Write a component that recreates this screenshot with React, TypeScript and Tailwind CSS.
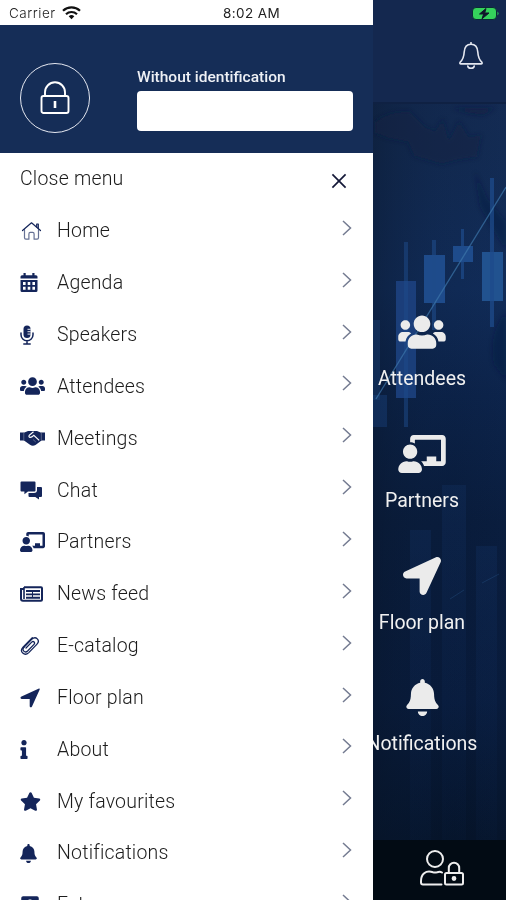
import type { ReactNode } from 'react'
import {
  FaBell,
  FaChalkboardTeacher,
  FaInfo,
  FaLocationArrow,
  FaPlusSquare,
  FaStar,
  FaUsers,
} from 'react-icons/fa'

function HomeIcon() {
  return (
    <svg width="22" height="20" viewBox="-1 0 21 20" fill="none" stroke="currentColor" strokeWidth="1.2" strokeLinejoin="round" strokeLinecap="round">
      <path d="M1 9.5 10 1.8l9 7.7" />
      <path d="M15.2 6V3h1.6v4.5" />
      <path d="M3 8.6v8.2q0 1.4 1.4 1.4h3V13q0-1.6 1.4-1.6h2.4q1.4 0 1.4 1.6v5.200h3q1.400 0 1.400-1.400V8.600" opacity=".65" />
    </svg>
  )
}

function CalendarIcon() {
  return (
    <svg width="18" height="20" viewBox="0 0 18 20" fill="currentColor">
      <path d="M3.500 0h2.200v2.200h6.600V0h2.200v2.200H16A1.500 1.500 0 0 1 17.500 3.700V5.500H.500V3.700A1.500 1.500 0 0 1 2 2.200h1.500Z" />
      <path fillRule="evenodd" d="M.500 7h17v10.500A1.500 1.500 0 0 1 16 19H2a1.500 1.500 0 0 1-1.500-1.500ZM3 9v3h2.600V9Zm4.700 0v3h2.600V9Zm4.700 0v3H15V9ZM3 13.800v3h2.600v-3Zm4.700 0v3h2.600v-3Zm4.700 0v3H15v-3Z" />
    </svg>
  )
}

function MicIcon() {
  return (
    <svg width="14" height="20" viewBox="0 0 14 20" fill="none">
      <rect x="3.5" y="0.5" width="7" height="12.5" rx="3.5" fill="currentColor" />
      <path d="M7.5 4.3h3.2M7.5 6.7h3.2M7.5 9.1h3.2" stroke="#fff" strokeWidth="0.9" />
      <path d="M1 8v1.7a6 6 0 0 0 12 0V8M7 15.7v3M3.8 18.9h6.4" stroke="currentColor" strokeWidth="1.5" strokeLinecap="round" />
    </svg>
  )
}

function HandshakeIcon() {
  return (
    <svg width="25" height="16" viewBox="0 0 25 16">
      <path d="M0 2.500h4.500L8 1h9l3.500 1.500H25v8h-3.500l-6 4.500q-3 1.500-5.500-.3L4 10.500H0Z" fill="currentColor" />
      <path d="m13.500 1.800-4.300 3.600q-.8 1.600 1 2 1.500 0 3.600-2l5.400 5" fill="none" stroke="#fff" strokeWidth="1.200" />
      <path d="m13 9.500 2.800 2.500M3.800 3v7M21.300 3v7" fill="none" stroke="#fff" strokeWidth="0.500" opacity=".6" />
    </svg>
  )
}

function ChatIcon() {
  return (
    <svg width="23" height="19" viewBox="0 0 23 19" fill="currentColor">
      <path d="M1.500 .5h13a1 1 0 0 1 1 1v8a1 1 0 0 1-1 1H8L4.400 13.200v-2.700H1.500a1 1 0 0 1-1-1v-8a1 1 0 0 1 1-1Z" />
      <path d="M17 6h4a1 1 0 0 1 1 1v8a1 1 0 0 1-1 1h-2v2.600L15.300 16H9.500a1 1 0 0 1-1-1v-3H14q3 0 3-3Z" />
    </svg>
  )
}

function NewsIcon() {
  return (
    <svg width="23" height="16" viewBox="0 0 23 16" fill="none" stroke="currentColor">
      <path d="M4 1.200h17q1 0 1 1v11.600q0 1-1 1H3q-2 0-2-2V3h3" strokeWidth="2" />
      <path d="M4 1v12" strokeWidth="1.600" />
      <path d="M6 5h14M6 8.400h14M6 11.800h14" strokeWidth="1.900" />
      <path d="M12.500 5v7" strokeWidth="1" />
    </svg>
  )
}

function ClipIcon() {
  return (
    <svg width="20" height="20" viewBox="0 0 20 20" fill="none" stroke="currentColor" strokeWidth="1.3" strokeLinecap="round">
      <path d="m6 12 5.700-5.900c1.700-1.600 4 .6 2.300 2.300L7.600 15c-2.700 2.500-6.300-1-3.700-3.700" />
      <path d="m3.900 11.300 7.800-8c4.200-3.800 9 1 5.100 5.100l-8 8.200C4.400 20.800-1 15.500 3 11.200L12.300 1.800" />
    </svg>
  )
}

function ArrowIcon() {
  return (
    <svg width="21" height="20" viewBox="0 0 21 20" fill="currentColor">
      <path d="M19 .6q1-.2.700.8L12 18.400q-.700 1.300-1.800.8-.500-.3-.500-1.200v-7H2q-1.300 0-1.500-1-.1-.9 1-1.400Z" />
    </svg>
  )
}

function LockIcon() {
  return (
    <svg width="30" height="34" viewBox="0 0 30 34" fill="none" stroke="#fff" strokeWidth="1.900" className="-ml-px">
      <path d="M5 15V11.3a10 10 0 0 1 20 0V15" />
      <rect x="1.5" y="15" width="27" height="17" rx="2" />
      <path d="M15 20v7" strokeWidth="2.6" />
    </svg>
  )
}

function BellOutline() {
  return (
    <svg width="26" height="28" viewBox="0 0 26 28" fill="none" stroke="#e4e7f0" strokeWidth="1.600" strokeLinejoin="round">
      <path d="M13 2.300c-4.300 0-6.500 3.200-6.800 7.700-.3 5.500-1.500 7.800-4 10.200-.7.900-.4 1.700.8 1.700h20c1.200 0 1.500-.8.800-1.700-2.500-2.400-3.700-4.700-4-10.200-.3-4.500-2.500-7.700-6.800-7.700Z" />
      <path d="M13 .6v1.700M9.800 24.100c.4 2.900 6 2.900 6.400 0" strokeLinecap="round" />
    </svg>
  )
}

function UserLock() {
  return (
    <svg width="46" height="38" viewBox="0 0 46 38" fill="none" stroke="#eee" strokeWidth="2" strokeLinecap="round" strokeLinejoin="round">
      <circle cx="16" cy="10" r="8" />
      <path d="M23 23.5c-2-1.2-3-.8-5-.2q-2 .5-4 0C6.500 20.800 2 25.500 2 32v1.500Q2 35.500 4 35.500H22.500" />
      <rect x="26" y="24" width="18" height="11.500" rx="1.500" />
      <path d="M29.800 24v-5a5.200 5.200 0 0 1 10.400 0v5" />
      <circle cx="35" cy="29.500" r="1.400" fill="#eee" />
    </svg>
  )
}

function Battery() {
  return (
    <svg width="27" height="13" viewBox="0 0 27 13">
      <rect x="0.5" y="0.5" width="24" height="12" rx="3.5" fill="#35d25c" stroke="#0b2a35" />
      <path d="M25.500 4.500q2 2 0 4" fill="#35d25c" />
      <path d="M14 1.500 7.500 7h4.200L10 11.800l7-5.800h-4.300Z" fill="#10162b" stroke="#10162b" />
    </svg>
  )
}

function Wifi() {
  return (
    <svg width="19" height="14" viewBox="0 0 19 14" fill="none" stroke="#111" strokeWidth="2.200">
      <path d="M1 4.800a12.400 12.400 0 0 1 17 0" />
      <path d="M4 8.200a8 8 0 0 1 11 0" />
      <path d="m9.500 13.300-2.800-3a4 4 0 0 1 5.600 0Z" fill="#111" stroke="none" />
    </svg>
  )
}

// candlestick chart behind the home screen tiles
function ChartBackdrop() {
  return (
    <svg className="absolute inset-0" width="133" height="900" viewBox="373 0 133 900">
      <defs>
        <linearGradient id="sky" x1="0" y1="0" x2="0" y2="1">
          <stop offset="0" stopColor="#14284f" />
          <stop offset=".16" stopColor="#12294f" />
          <stop offset=".32" stopColor="#102a55" />
          <stop offset=".44" stopColor="#0b2146" />
          <stop offset=".58" stopColor="#081a38" />
          <stop offset=".78" stopColor="#071836" />
          <stop offset=".93" stopColor="#041124" />
        </linearGradient>
        <linearGradient id="glow" x1="0" y1="0" x2="1" y2="0">
          <stop offset="0" stopColor="#0a1930" stopOpacity=".45" />
          <stop offset=".6" stopColor="#0f2850" stopOpacity=".1" />
          <stop offset="1" stopColor="#1b3d78" stopOpacity=".1" />
        </linearGradient>
        <linearGradient id="bars" x1="0" y1="0" x2="0" y2="1">
          <stop offset="0" stopColor="#143468" stopOpacity=".3" />
          <stop offset="1" stopColor="#0c2650" stopOpacity=".1" />
        </linearGradient>
        <filter id="soft" x="-20%" y="-20%" width="140%" height="140%">
          <feGaussianBlur stdDeviation="2" />
        </filter>
      </defs>
      <rect x="373" width="133" height="900" fill="url(#sky)" />
      <rect x="373" y="103" width="133" height="737" fill="url(#glow)" />
      <g filter="url(#soft)">
        <path d="M375 122q15-12 35-10l15 15 10 4 8-12 6 22 10-20 10 16 12-2-4 22-20 3-15 4-28-8-6-14-20-4-13-5Z" fill="#0e2140" opacity=".5" />
        <path d="M453 108h42l-12 7-15-2Z" fill="#0e2140" opacity=".6" />
        <path d="M475 172l12 26 19 24v28l-14-22-12-22Z" fill="#0c1e3e" opacity=".4" />
        <path d="M506 312q-18 22-12 52l12 16Z" fill="#0b1c3b" opacity=".4" />
      </g>
      <g fill="#1e4b8b">
        <rect x="396" y="281" width="20" height="117" fill="#1d4383" opacity=".85" />
        <rect x="404" y="242" width="4" height="185" opacity=".5" />
        <rect x="424" y="255" width="21" height="48" />
        <rect x="432" y="240" width="4" height="90" opacity=".6" />
        <rect x="453" y="246" width="20" height="16" />
        <rect x="461" y="229" width="3" height="50" opacity=".7" />
        <rect x="482" y="252" width="21" height="49" fill="#21528f" />
        <rect x="490" y="178" width="4" height="149" opacity=".75" />
        <rect x="373" y="320" width="7" height="80" opacity=".3" />
        <rect x="373" y="395" width="14" height="32" opacity=".35" />
      </g>
      <path d="M376 399 506 187" stroke="#3d77ab" strokeWidth="1.300" opacity=".7" />
      <g fill="url(#bars)">
        <rect x="410" y="530" width="21" height="310" />
        <rect x="442" y="485" width="24" height="355" />
        <rect x="476" y="546" width="21" height="294" />
      </g>
      <path d="M450 599l14-9M482 583l17-9" stroke="#255184" opacity=".4" />
      <rect x="373" width="133" height="103" fill="#14284f" />
      <rect x="373" y="102" width="133" height="2" fill="#0f2143" />
      <rect x="373" y="840" width="133" height="60" fill="#020b14" />
    </svg>
  )
}

const menu: { label: string; icon: ReactNode }[] = [
  { label: 'Home', icon: <HomeIcon /> },
  { label: 'Agenda', icon: <CalendarIcon /> },
  { label: 'Speakers', icon: <MicIcon /> },
  { label: 'Attendees', icon: <FaUsers className="h-[20px] w-[25px]" /> },
  { label: 'Meetings', icon: <HandshakeIcon /> },
  { label: 'Chat', icon: <ChatIcon /> },
  { label: 'Partners', icon: <FaChalkboardTeacher className="h-[20px] w-[25px]" /> },
  { label: 'News feed', icon: <NewsIcon /> },
  { label: 'E-catalog', icon: <ClipIcon /> },
  { label: 'Floor plan', icon: <ArrowIcon /> },
  { label: 'About', icon: <FaInfo className="h-[19px] w-[8px]" /> },
  { label: 'My favourites', icon: <FaStar size={21} /> },
  { label: 'Notifications', icon: <FaBell className="h-[19px] w-[17px]" /> },
  { label: 'Extra', icon: <FaPlusSquare size={20} /> },
]

const tiles: { label: string; icon: ReactNode }[] = [
  { label: 'Attendees', icon: <FaUsers className="h-[38px] w-[48px]" /> },
  { label: 'Partners', icon: <FaChalkboardTeacher className="h-[38px] w-[48px]" /> },
  { label: 'Floor plan', icon: <FaLocationArrow size={38} /> },
  { label: 'Notifications', icon: <FaBell size={37} /> },
]

export default function App() {
  return (
    <div className="flex h-[900px] w-[506px] overflow-hidden bg-[#0b1f42] font-['Roboto',sans-serif]">
      <aside className="relative z-10 flex w-[373px] shrink-0 flex-col overflow-hidden bg-white">
        {/* Status bar */}
        <div className="flex h-[25px] shrink-0 items-center pl-[9px] pt-px text-[#222]">
          <span className="w-[53px] font-['Inter',sans-serif] text-[13.500px] font-light tracking-[0.500px]">Carrier</span>
          <Wifi />
          <span className="ml-[142px] whitespace-nowrap font-['Inter',sans-serif] text-[13.500px] tracking-[0.400px]">8:02 AM</span>
        </div>

        {/* Identification */}
        <div className="flex h-[128px] shrink-0 bg-[#152d57]">
          <div className="ml-[20px] mt-[38px] flex size-[70px] items-center justify-center rounded-full border-[1.5px] border-[#e5e8f1]">
            <LockIcon />
          </div>
          <div className="ml-[47px] mt-[41px]">
            <div className="h-[25px] text-[15.500px] font-medium leading-[22px] text-[#eef0f5]">Without identification</div>
            <div className="h-[40px] w-[216px] rounded bg-white" />
          </div>
        </div>

        <div className="flex h-[52px] shrink-0 items-center justify-between pl-[20px] pr-[26px]">
          <span className="text-[19.500px] font-light tracking-[0.200px] text-[#1c1c1c]">Close menu</span>
          <svg width="16" height="16" viewBox="0 0 17 17" stroke="#141838" strokeWidth="1.800" className="mt-[4px]">
            <path d="m1.500 1.500 14 14M15.500 1.500l-14 14" />
          </svg>
        </div>

        <nav>
          {menu.map(m => (
            <div key={m.label} className="flex h-[51.850px] items-center pl-[20px] pr-[21px]">
              <span className="flex w-[37px] text-[#14255a]">{m.icon}</span>
              <span className="flex-1 text-[19.500px] font-light tracking-[0.200px] text-[#1c1c1c]">{m.label}</span>
              <svg width="10" height="16" viewBox="0 0 10 16" fill="none" stroke="#747b91" strokeWidth="1.500" className="mb-[6px]">
                <path d="m1 1 7.500 7L1 15" />
              </svg>
            </div>
          ))}
        </nav>
      </aside>

      <main className="relative w-[133px] shrink-0">
        <ChartBackdrop />
        <div className="relative flex h-full flex-col">
          <div className="flex h-[103px] flex-col items-end">
            <span className="mr-[7px] mt-[7px]"><Battery /></span>
            <span className="mr-[22px] mt-[22px]"><BellOutline /></span>
          </div>
          <div className="mt-[210px] flex w-[98px] flex-col items-center text-[#ebebeb]">
            {tiles.map(t => (
              <div key={t.label} className="flex h-[122px] flex-col items-center">
                {t.icon}
                <span className="mt-[14px] whitespace-nowrap text-[19.500px] leading-[28px] text-[#f0f0f0]">{t.label}</span>
              </div>
            ))}
          </div>
          <div className="mt-auto flex h-[60px] items-start pl-[46px] pt-[9px]">
            <UserLock />
          </div>
        </div>
      </main>
    </div>
  )
}
